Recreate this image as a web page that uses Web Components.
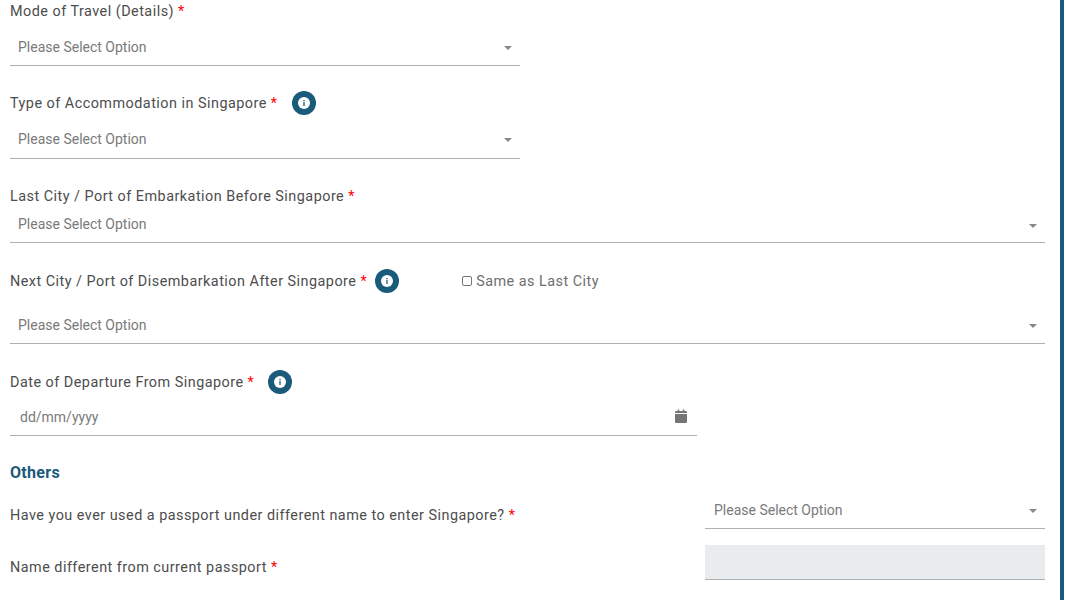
<!DOCTYPE html>
<html>
<head>
<meta charset="utf-8">
<title>Travel details</title>
<style>
  html, body { margin: 0; padding: 0; background: #fff; }
  body { font-family: Roboto, "Liberation Sans", sans-serif; height: 600px; overflow: hidden; }
</style>
</head>
<body>

<template id="info-tpl">
  <style>
    :host { display: inline-flex; width: 24px; height: 24px; flex: none; }
    svg { display: block; }
  </style>
  <svg width="24" height="24" viewBox="0 0 24 24" aria-hidden="true">
    <circle cx="12" cy="12" r="12" fill="#1a5a7a"/>
    <circle cx="12" cy="12" r="6" fill="#fff"/>
    <rect x="11.3" y="9" width="1.4" height="1.3" fill="#2f6c8a"/>
    <rect x="11.3" y="11" width="1.4" height="4" fill="#2f6c8a"/>
  </svg>
</template>

<template id="label-tpl">
  <style>
    :host { display: flex; align-items: center; color: #4d4d4d; font-size: 14.4px; letter-spacing: .48px; white-space: nowrap; }
    .req { color: #f00; margin-left: 4px; }
    ::slotted(info-dot) { margin-left: 14px; }
  </style>
  <span><slot></slot></span><span class="req">*</span><slot name="after"></slot>
</template>

<template id="select-tpl">
  <style>
    :host { display: flex; align-items: center; box-sizing: border-box; height: 38px; padding: 0 8px 0 var(--pad-l, 8px); border-bottom: 1px solid #b0b0b0; color: #7a7a7a; font-size: 14px; }
    span { flex: 1; }
    i { width: 0; height: 0; border: 4.5px solid transparent; border-top-color: #888; border-bottom: 0; margin-top: 3px; }
  </style>
  <span>Please Select Option</span><i></i>
</template>

<template id="date-tpl">
  <style>
    :host { display: flex; align-items: center; box-sizing: border-box; width: 687px; height: 38px; padding: 0 10px 0 10px; border-bottom: 1px solid #b0b0b0; color: #7a7a7a; font-size: 14px; }
    span { flex: 1; }
    svg { display: block; margin-bottom: 1px; }
  </style>
  <span>dd/mm/yyyy</span>
  <svg width="12" height="14" viewBox="0 0 12 14" aria-hidden="true">
    <path fill="#757575" d="M0 5h12v7.7a1.2 1.2 0 0 1-1.2 1.3H1.2A1.2 1.2 0 0 1 0 12.700zM1.200 2h1.500V.4h1.500V2h3.600V.4h1.500V2h1.500A1.200 1.200 0 0 1 12 3.200V4H0v-.8A1.200 1.200 0 0 1 1.200 2z"/>
  </svg>
</template>

<template id="field-tpl">
  <style>
    :host { display: block; }
    .lab { display: flex; align-items: center; height: var(--lab-h, 22px); }
    .gap { height: var(--gap, 0); }
  </style>
  <div class="lab"><slot name="label"></slot></div>
  <div class="gap"></div>
  <slot></slot>
</template>

<template id="inline-tpl">
  <style>
    :host { display: grid; grid-template-columns: 695px 340px; align-items: center; }
    .lab { padding-top: 10px; }
  </style>
  <div class="lab"><slot name="label"></slot></div>
  <div><slot></slot></div>
</template>

<template id="page-tpl">
  <style>
    :host { display: flex; flex-direction: column; box-sizing: border-box; width: 1064px; height: 600px; padding: 0 15px 0 10px; border-right: 4px solid #1a5a7a; }
  </style>
  <slot></slot>
</template>

<template id="check-tpl">
  <style>
    :host { display: inline-flex; align-items: center; color: #6e6e6e; font-size: 14.4px; letter-spacing: .48px; white-space: nowrap; }
    b { box-sizing: border-box; width: 10px; height: 10px; border: 1px solid #767676; border-radius: 2px; background: #fff; margin-right: 4px; }
  </style>
  <b></b><slot></slot>
</template>

<template id="blank-tpl">
  <style>
    :host { display: block; height: 35px; background: #e9ecef; border-bottom: 1px solid #b0b0b0; box-sizing: border-box; }
  </style>
</template>

<template id="head-tpl">
  <style>
    :host { display: block; color: #1a5a7a; font-size: 16px; font-weight: 700; letter-spacing: .3px; line-height: 22px; }
  </style>
  <slot></slot>
</template>

<travel-page>
  <form-field style="--lab-h:22px; --gap:6px; margin-bottom:25px">
    <req-label slot="label">Mode of Travel (Details)</req-label>
    <option-select style="width:510px"></option-select>
  </form-field>

  <form-field style="--lab-h:24px; --gap:6px; margin-bottom:27px">
    <req-label slot="label">Type of Accommodation in Singapore<info-dot slot="after"></info-dot></req-label>
    <option-select style="width:510px; padding-bottom:2px"></option-select>
  </form-field>

  <form-field style="--lab-h:20px; --gap:0px; margin-bottom:26px">
    <req-label slot="label">Last City / Port of Embarkation Before Singapore</req-label>
    <option-select style="height:37px"></option-select>
  </form-field>

  <form-field style="--lab-h:24px; --gap:13px; margin-bottom:26px">
    <req-label slot="label">Next City / Port of Disembarkation After Singapore<info-dot slot="after" style="margin-left:8px"></info-dot><tick-box slot="after" style="margin-left:63px">Same as Last City</tick-box></req-label>
    <option-select></option-select>
  </form-field>

  <form-field style="--lab-h:24px; --gap:4px; margin-bottom:26px">
    <req-label slot="label">Date of Departure From Singapore<info-dot slot="after"></info-dot></req-label>
    <date-input></date-input>
  </form-field>

  <section-head style="margin-bottom:7px">Others</section-head>

  <inline-field style="margin-bottom:16px">
    <req-label slot="label">Have you ever used a passport under different name to enter Singapore?</req-label>
    <option-select style="--pad-l:9px"></option-select>
  </inline-field>

  <inline-field>
    <req-label slot="label">Name different from current passport</req-label>
    <blank-input></blank-input>
  </inline-field>
</travel-page>

<script>
  // every element just stamps its template into an open shadow root
  const parts = {
    'info-dot': 'info-tpl',
    'req-label': 'label-tpl',
    'option-select': 'select-tpl',
    'date-input': 'date-tpl',
    'form-field': 'field-tpl',
    'inline-field': 'inline-tpl',
    'travel-page': 'page-tpl',
    'tick-box': 'check-tpl',
    'blank-input': 'blank-tpl',
    'section-head': 'head-tpl'
  };
  for (const [name, tpl] of Object.entries(parts)) {
    customElements.define(name, class extends HTMLElement {
      constructor() {
        super();
        this.attachShadow({ mode: 'open' });
        this.shadowRoot.appendChild(document.getElementById(tpl).content.cloneNode(true));
      }
    });
  }
</script>
</body>
</html>
